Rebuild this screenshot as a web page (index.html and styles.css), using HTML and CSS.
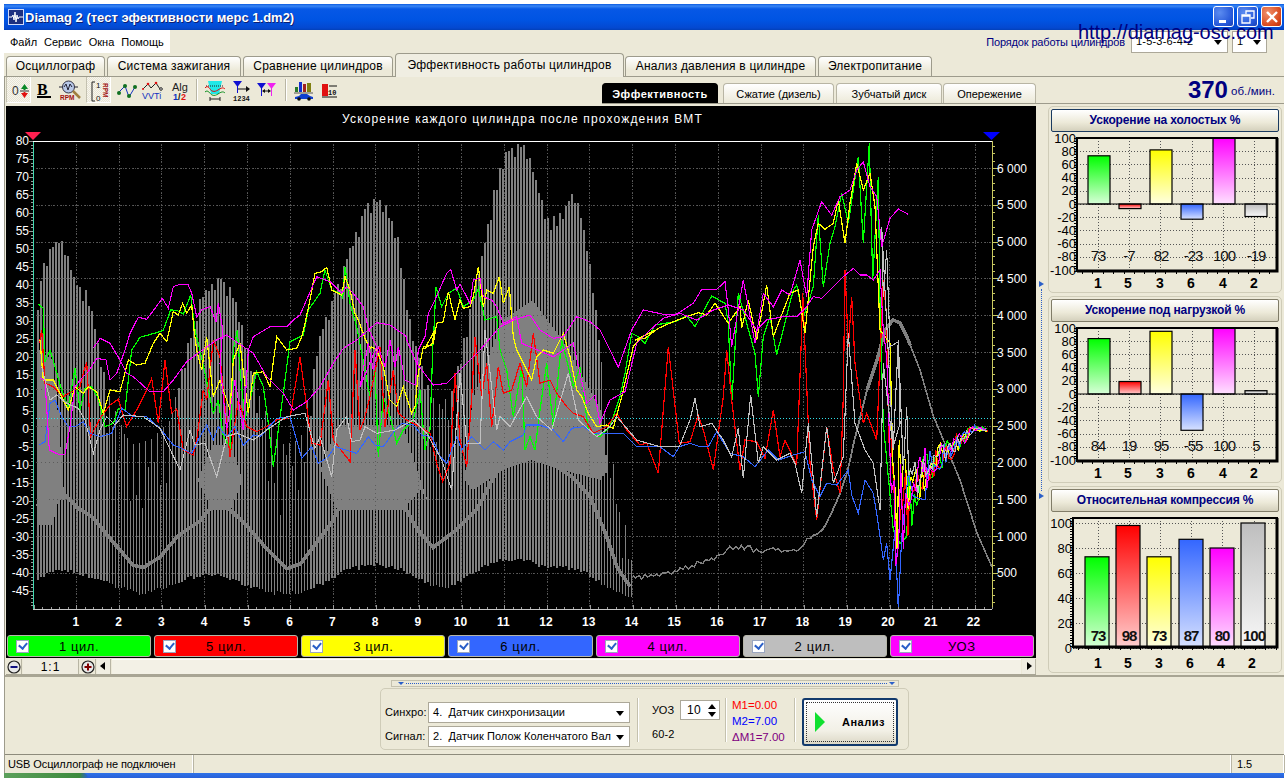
FILE: index.html
```html
<!DOCTYPE html>
<html lang="ru">
<head>
<meta charset="utf-8">
<title>Diamag 2</title>
<link rel="stylesheet" href="styles.css">
</head>
<body>
<div class="window">
  <div class="titlebar">
    <svg class="appicon" width="16" height="16" viewBox="0 0 16 16"><rect x="0.5" y="0.5" width="15" height="15" fill="#1c2f80" stroke="#cfd8f8"/><path d="M1 8h3l1-2 1 5 1-8 1 10 1-7 1 4 1-2h4" fill="none" stroke="#fff"/></svg>
    <span class="title-text">Diamag 2 (тест эфективности мерс 1.dm2)</span>
    <div class="winbtns">
      <span class="winbtn"><svg width="20" height="20" viewBox="0 0 20 20"><rect x="5" y="13" width="7" height="3" fill="#fff"/></svg></span>
      <span class="winbtn"><svg width="20" height="20" viewBox="0 0 20 20"><path d="M8 7V4h8v7h-3M4 8h8v8H4z M4 9h8" fill="none" stroke="#fff" stroke-width="1.3"/></svg></span>
      <span class="winbtn close"><svg width="20" height="20" viewBox="0 0 20 20"><path d="M5 5l10 10M15 5L5 15" stroke="#fff" stroke-width="2.4"/></svg></span>
    </div>
  </div>
  <div class="watermark">http://diamag-osc.com</div>
  <div class="menurow">
    <nav class="menu"><span>Файл</span><span>Сервис</span><span>Окна</span><span>Помощь</span></nav>
    <div class="order">
      <span class="order-label">Порядок работы цилиндров</span>
      <span class="combo order-combo"><span class="combo-text">1-5-3-6-4-2</span><i class="arrow"></i></span>
      <span class="combo order-small"><span class="combo-text">1</span><i class="arrow"></i></span>
    </div>
  </div>
  <div class="tabs">
    <span class="tab t1">Осциллограф</span>
    <span class="tab t2">Система зажигания</span>
    <span class="tab t3">Сравнение цилиндров</span>
    <span class="tab active t4">Эффективность работы цилиндров</span>
    <span class="tab t5">Анализ давления в цилиндре</span>
    <span class="tab t6">Электропитание</span>
  </div>
  <div class="content">
    <div class="toolrow">
      <div class="tools">
        <div class="toolgroup">
          <span class="tool pressed"><svg width="25" height="26" viewBox="0 0 25 26"><text x="5" y="18" class="ic-t" fill="#333">0</text><path d="M13 14h9" stroke="#333"/><path d="M17.5 7l3.5 5h-2.5v1h-2v-1H14z" fill="#0a8a28"/><path d="M17.5 21l3.5-5h-2.5v-1h-2v1H14z" fill="#e01010"/></svg></span>
          <span class="tool"><svg width="26" height="26" viewBox="0 0 26 26"><text x="6" y="18" class="ic-b">B</text><rect x="6" y="19" width="14" height="2" fill="#000"/></svg></span>
          <span class="tool"><svg width="26" height="26" viewBox="0 0 26 26"><path d="M2 10h19" stroke="#223"/><circle cx="11.500" cy="10" r="6" fill="#b8c8e8" stroke="#334"/><path d="M7 10l2-3 2 6 2-6 2 3" fill="none" stroke="#223"/><path d="M16 14l7 7" stroke="#a08040" stroke-width="2.500"/><text x="3" y="23" class="ic-s" fill="#a01010">RPM</text></svg></span>
        </div>
        <div class="toolgroup g2">
          <span class="tool pressed"><svg width="25" height="26" viewBox="0 0 25 26"><path d="M8 5H5v19h3" fill="none" stroke="#222"/><text x="9" y="11" class="ic-d" fill="#111">1</text><text x="9" y="24" class="ic-d" fill="#111">0</text><text x="0" y="0" class="ic-s" fill="#a01010" transform="translate(16 6) rotate(90)">RPM</text></svg></span>
          <span class="tool shifted"><svg width="26" height="26" viewBox="0 0 26 26"><path d="M4 16l7-7 4 11 6-10" fill="none" stroke="#1030c0"/><g fill="#107020"><circle cx="5" cy="16" r="2"/><circle cx="11" cy="9" r="2"/><circle cx="15" cy="19" r="2"/><circle cx="21" cy="10" r="2"/></g></svg></span>
          <span class="tool"><svg width="26" height="26" viewBox="0 0 26 26"><path d="M3 12l5-5 3 4 5-5 4 6" fill="none" stroke="#222"/><g fill="#e01010"><circle cx="3" cy="12" r="1"/><circle cx="8" cy="7" r="1.300"/><circle cx="16" cy="6" r="1.300"/></g><circle cx="21" cy="12" r="1.300" fill="#fff" stroke="#222"/><text x="2" y="22" class="ic-v">VVTi</text></svg></span>
          <span class="tool"><svg width="26" height="26" viewBox="0 0 26 26"><text x="6" y="14" class="ic-a">Alg</text><text x="7" y="23" class="ic-h" fill="#1030c0">1</text><text x="12" y="23" class="ic-h" fill="#111">/</text><text x="15" y="23" class="ic-h" fill="#e01010">2</text></svg></span>
        </div>
        <i class="toolsep sep1"></i>
        <div class="toolgroup">
          <span class="tool"><svg width="26" height="26" viewBox="0 0 26 26"><path d="M6 4h14l-3 13H9z" fill="#20e8e8"/><path d="M4 9h18" stroke="#222" stroke-dasharray="1 1"/><path d="M3 11c3-4 5 2 7 3 3 1 4 0 6-1 3-2 5-3 7-1" fill="none" stroke="#e01010"/><path d="M3 15c3-3 5 2 7 3 3 1 4 0 6-1 3-2 5-3 7-1" fill="none" stroke="#109020"/><path d="M8 22h10M8 20v4M18 20v4" stroke="#222"/></svg></span>
          <span class="tool"><svg width="26" height="26" viewBox="0 0 26 26"><path d="M5 4h9l-4.500 6z" fill="#1010d0"/><path d="M9.500 8v8" stroke="#1010d0"/><path d="M10 12h11" stroke="#111"/><path d="M18 9l4 3-4 3z" fill="#111"/><text x="5" y="24" class="ic-n">1234</text></svg></span>
          <span class="tool"><svg width="26" height="26" viewBox="0 0 26 26"><path d="M3 6h9l-4.500 6z" fill="#1010d0"/><path d="M7.500 10v9" stroke="#1010d0"/><path d="M13 6h9l-4.500 6z" fill="#f020f0"/><path d="M17.500 10v9" stroke="#f020f0"/><path d="M9 14h7" stroke="#111"/><path d="M11 12l-3 2 3 2zM14 12l3 2-3 2z" fill="#111"/></svg></span>
        </div>
        <i class="toolsep sep2"></i>
        <div class="toolgroup">
          <span class="tool"><svg width="26" height="26" viewBox="0 0 26 26"><rect x="4" y="10" width="3" height="5" fill="#2a7a2a"/><rect x="8" y="5" width="3" height="10" fill="#1030d0"/><rect x="12" y="7" width="3" height="8" fill="#a02020"/><rect x="16" y="6" width="4" height="9" fill="#808010"/><path d="M3 16h19" stroke="#555"/><path d="M4 22v-2l4-1 2-2h6l3 2 3 1v2z" fill="#1040d0"/><circle cx="8" cy="22" r="1.800" fill="#111"/><circle cx="18" cy="22" r="1.800" fill="#111"/></svg></span>
          <span class="tool"><svg width="26" height="26" viewBox="0 0 26 26"><rect x="5" y="7" width="6" height="12" fill="#e01010"/><text x="11" y="18" class="ic-n">10</text><path d="M5 20h15M12 9h8" stroke="#111"/></svg></span>
        </div>
      </div>
      <div class="viewtabs">
        <span class="vtab black">Эффективность</span>
        <span class="vtab v2">Сжатие (дизель)</span>
        <span class="vtab v3">Зубчатый диск</span>
        <span class="vtab v4">Опережение</span>
        <div class="rpm"><b>370</b><span>об./мин.</span></div>
      </div>
    </div>
    <div class="main">
      <div class="chartcol">
        <div class="chartblack">
          <svg id="plot" class="plot" width="1030" height="529" viewBox="6 106 1030 529">
            <g id="plotdata"></g>
            <text x="522.500" y="122.500" class="ch-title" text-anchor="middle">Ускорение каждого цилиндра после прохождения ВМТ</text>
            <g id="plotlabels"></g>
          </svg>
          <div class="series">
            <label class="sbtn green"><i class="check"></i><span>1 цил.</span></label>
            <label class="sbtn red"><i class="check"></i><span>5 цил.</span></label>
            <label class="sbtn yellow"><i class="check"></i><span>3 цил.</span></label>
            <label class="sbtn blue"><i class="check"></i><span>6 цил.</span></label>
            <label class="sbtn magenta"><i class="check"></i><span>4 цил.</span></label>
            <label class="sbtn gray"><i class="check"></i><span>2 цил.</span></label>
            <label class="sbtn magenta"><i class="check"></i><span>УОЗ</span></label>
          </div>
        </div>
        <div class="scrollrow">
          <span class="zoomb"><svg width="14" height="14" viewBox="0 0 14 14"><circle cx="7" cy="7" r="6" fill="#e8e8e8" stroke="#222" stroke-width="1.200"/><rect x="3.500" y="6" width="7" height="2" fill="#101080"/></svg></span>
          <span class="zoomval">1:1</span>
          <span class="zoomb"><svg width="14" height="14" viewBox="0 0 14 14"><circle cx="7" cy="7" r="6" fill="#e8e8e8" stroke="#222" stroke-width="1.200"/><path d="M3.500 7h7M7 3.500v7" stroke="#800000" stroke-width="2"/></svg></span>
          <span class="sarrow left"></span>
          <span class="strack"></span>
          <span class="sarrow right"></span>
        </div>
      </div>
      <div class="vsplit"><i class="tri"></i><i class="vdots"></i><i class="tri"></i></div>
      <div class="side">
        <section class="group"><h3 class="ghead">Ускорение на холостых %</h3><svg id="m1" class="mini" width="232" height="160"></svg></section>
        <section class="group"><h3 class="ghead">Ускорение под нагрузкой %</h3><svg id="m2" class="mini" width="232" height="160"></svg></section>
        <section class="group"><h3 class="ghead">Относительная компрессия %</h3><svg id="m3" class="mini" width="232" height="160"></svg></section>
      </div>
    </div>
    <div class="bottom">
      <div class="hsplit"><i class="dn"></i><i class="hdots"></i><i class="dn"></i></div>
      <div class="panel">
        <div class="selects">
          <span class="flabel">Синхро:</span><span class="combo sel"><span class="combo-text">4.&nbsp; Датчик синхронизации</span><i class="arrow"></i></span>
          <span class="flabel">Сигнал:</span><span class="combo sel"><span class="combo-text">2.&nbsp; Датчик Полож Коленчатого Вал</span><i class="arrow"></i></span>
        </div>
        <i class="psep s1"></i>
        <div class="uoz">
          <div class="uozrow"><span class="flabel">УОЗ</span><span class="spin"><span class="spin-val">10</span><span class="spin-arrows"><i class="up"></i><i class="down"></i></span></span></div>
          <span class="flabel teeth">60-2</span>
        </div>
        <i class="psep s2"></i>
        <div class="marks"><span class="mred">M1=0.00</span><span class="mblue">M2=7.00</span><span class="mpurple">ΔM1=7.00</span></div>
        <i class="psep s3"></i>
        <button class="analyze"><span class="focus"><i class="play"></i><b>Анализ</b></span></button>
      </div>
    </div>
    <div class="status">
      <span class="st st1">USB Осциллограф не подключен</span>
      <span class="st st2"></span>
      <span class="st st3">1.5</span>
    </div>
  </div>
  <div class="taskbar"><i class="start"></i></div>
</div>
<script src="chart.js"></script>
</body>
</html>
```
FILE: styles.css
```css
* { box-sizing: border-box; }
html, body { margin: 0; padding: 0; background: #fff; }
body { padding: 4px 4px 0; font-family: "Liberation Sans", Arial, sans-serif; font-size: 11px; color: #000; height: 778px; overflow: hidden; }
.window { position: relative; width: 1280px; height: 774px; display: flex; flex-direction: column; background: #ece9d8; }

.titlebar { height: 26px; flex: none; display: flex; align-items: center; padding: 0 2px 0 4px; background: linear-gradient(#0a5ae0 0, #3a86f4 2px, #0658e6 5px, #0054e3 16px, #0448d0 24px, #0340b8 100%); color: #fff; }
.appicon { flex: none; }
.title-text { margin-left: 1px; font-weight: bold; font-size: 13px; letter-spacing: 0; text-shadow: 1px 1px 0 #0f1f70; white-space: nowrap; }
.winbtns { margin-left: auto; display: flex; gap: 3px; align-self: flex-start; margin-top: 2px; }
.winbtn { width: 21px; height: 21px; border: 1px solid #fff; border-radius: 3px; background: radial-gradient(circle at 30% 30%, #5c8cf0, #2456d8 70%, #1a40b0); display: block; }
.winbtn.close { background: radial-gradient(circle at 30% 30%, #f0906c, #d8481c 70%, #b83010); }
.winbtn svg { display: block; }
.watermark { position: absolute; left: 1074px; top: 17px; font-size: 20px; letter-spacing: -.05px; color: #000080; white-space: nowrap; z-index: 5; }

.menurow { height: 23px; flex: none; display: flex; justify-content: space-between; }
.menu { width: 166px; background: #fff; display: flex; gap: 7px; padding: 0 0 0 6px; align-items: center; font-size: 11px; letter-spacing: 0; }
.order { display: flex; align-items: center; gap: 4px; padding-right: 17px; }
.order-label { color: #000080; letter-spacing: -.15px; margin-right: 2px; }
.combo { position: relative; display: block; height: 21px; background: #fff; border: 1px solid #aca899; line-height: 18px; overflow: hidden; white-space: nowrap; }
.combo-text { padding-left: 4px; display: block; overflow: hidden; }
.arrow { position: absolute; right: 5px; top: 8px; width: 0; height: 0; border-left: 4px solid transparent; border-right: 4px solid transparent; border-top: 5px solid #000; }
.order-combo { width: 97px; height: 22px; letter-spacing: .2px; }
.order-small { width: 35px; height: 22px; }

.tabs { height: 23px; flex: none; display: flex; align-items: flex-end; padding-left: 2px; gap: 2px; position: relative; z-index: 1; }
.tab { height: 20px; border: 1px solid #9d9b8c; border-bottom: 0; border-radius: 4px 4px 0 0; background: linear-gradient(#fff, #ece9d8 70%); text-align: center; font-size: 12px; line-height: 19px; letter-spacing: .2px; white-space: nowrap; }
.t1 { width: 99px; } .t2 { width: 134px; } .t3 { width: 150px; }
.active { width: 229px; height: 24px; background: #f0eee2; margin-bottom: -1px; line-height: 22px; margin-left: 0; margin-right: -1px; }
.t5 { width: 191px; } .t6 { width: 114px; }

.content { flex: 1; min-height: 0; display: flex; flex-direction: column; border-top: 1px solid #9d9b8c; border-left: 1px solid #9d9b8c; }

.toolrow { height: 28px; flex: none; display: flex; justify-content: space-between; }
.tools { display: flex; padding-left: 1px; height: 26px; }
.toolgroup { display: flex; }
.g2 { margin-left: 3px; }
.tool { width: 26px; height: 26px; display: block; }
.tool svg { display: block; }
.shifted { margin-left: 3px; }
.pressed { width: 25px; background: repeating-conic-gradient(#f8f6ee 0 25%, #e8e5d6 0 50%) 0 0/2px 2px; border-right: 1px solid #fff; border-bottom: 1px solid #fff; border-left: 1px solid #c4c1b0; }
.toolsep { width: 2px; height: 22px; background: #b8b5a4; border-right: 1px solid #fff; }
.sep1 { margin: 2px 4px 0 4px; }
.sep2 { margin: 2px 4px 0 5px; }
.ic-t { font: 12px "Liberation Sans", sans-serif; }
.ic-b { font: bold 16px "Liberation Serif", serif; }
.ic-s { font: bold 6.500px "Liberation Sans", sans-serif; }
.ic-d { font: 8px "Liberation Sans", sans-serif; }
.ic-v { font: 9px "Liberation Sans", sans-serif; fill: #1030c0; }
.ic-a { font: 11px "Liberation Sans", sans-serif; fill: #222; }
.ic-h { font: bold 9px "Liberation Sans", sans-serif; }
.ic-n { font: bold 7px "Liberation Mono", monospace; fill: #111; }

.viewtabs { width: 682px; height: 27px; display: flex; align-items: flex-end; border-bottom: 1px solid #9d9b8c; padding-left: 0; position: relative; }
.vtab { height: 20px; margin-bottom: 0; border: 1px solid #b8b5a4; border-bottom: 0; border-radius: 4px 4px 0 0; background: linear-gradient(#fff, #ece9d8); text-align: center; line-height: 20px; font-size: 11px; letter-spacing: 0; white-space: nowrap; }
.vtab.black { width: 116px; margin-right: 5px; background: #000; color: #fff; font-weight: bold; border-color: #000; letter-spacing: .5px; }
.v2 { width: 111px; margin-right: 2px; } .v3 { width: 106px; margin-right: 1px; } .v4 { width: 93px; }
.rpm { position: absolute; right: 9px; bottom: 0; height: 27px; display: flex; align-items: center; gap: 3px; color: #000080; }
.rpm b { font-size: 24px; letter-spacing: 0; line-height: 26px; }
.rpm span { font-size: 11.500px; color: #000080; letter-spacing: .1px; margin-top: 3px; }

.main { height: 570px; flex: none; display: flex; padding-left: 1px; padding-top: 1px; }
.chartcol { width: 1030px; flex: none; display: flex; flex-direction: column; }
.chartblack { background: #000; height: 552px; flex: none; }
.plot { display: block; }
.ch-title { font: 12px "Liberation Sans", sans-serif; letter-spacing: 1.15px; fill: #fff; }
.ylab { font: 12px "Liberation Sans", sans-serif; fill: #fff; }
.xlab { font: bold 12px "Liberation Sans", sans-serif; fill: #fff; }

.series { display: flex; gap: 3px; padding: 0 2px 0 1px; height: 22px; }
.sbtn { flex: 1; height: 22px; border: 1px solid #b5b5a8; border-radius: 3px; display: flex; align-items: center; position: relative; font-size: 13px; letter-spacing: .6px; }
.sbtn span { flex: 1; text-align: center; }
.check { position: absolute; left: 8px; top: 4px; width: 13px; height: 13px; background: #fff; border: 1px solid #9aa6c0; }
.check::after { content: ""; position: absolute; left: 2px; top: 1px; width: 6px; height: 4px; border-left: 2px solid #2a5fc8; border-bottom: 2px solid #2a5fc8; transform: rotate(-50deg); }
.green { background: #00ff00; } .red { background: #ff0000; } .yellow { background: #ffff00; } .blue { background: #3366ff; } .magenta { background: #ff00ff; } .gray { background: #bebebe; }

.scrollrow { height: 16px; margin-top: 1px; display: flex; align-items: stretch; gap: 1px; border-bottom: 1px solid #a8a594; }
.zoomb { width: 16px; background: #ece9d8; border-right: 1px solid #b8b5a4; display: flex; align-items: center; justify-content: center; }
.zoomval { width: 56px; text-align: center; font-size: 12px; line-height: 17px; letter-spacing: 1px; background: #efece0; border-right: 1px solid #b8b5a4; }
.sarrow { width: 14px; position: relative; background: #f0eee2; border-right: 1px solid #b8b5a4; }
.sarrow::after { content: ""; position: absolute; top: 3px; width: 0; height: 0; border-top: 4px solid transparent; border-bottom: 4px solid transparent; }
.sarrow.left::after { left: 3px; border-right: 5px solid #000; }
.sarrow.right::after { left: 5px; border-left: 5px solid #000; }
.strack { flex: 1; background: #f3f1e6; border-top: 1px solid #fff; }

.vsplit { width: 12px; flex: none; display: flex; flex-direction: column; align-items: center; justify-content: center; height: 568px; padding: 0 2px 0 0; }
.vsplit .tri { width: 0; height: 0; border-top: 3px solid transparent; border-bottom: 3px solid transparent; border-left: 5px solid #2a5fc8; }
.vdots { height: 202px; width: 1px; border-left: 1px dotted #2a5fc8; margin: 2px 0; }

.side { width: 234px; flex: none; display: flex; flex-direction: column; gap: 3px; }
.group { height: 187px; border: 1px solid #cfccb8; border-radius: 5px; padding: 2px 2px 0; display: block; }
.ghead { margin: 0; height: 23px; border: 1px solid #1a3a60; border-radius: 2px; background: linear-gradient(#fff, #ece9d8 60%, #d4d0bc); color: #00007f; font-size: 12px; line-height: 21px; text-align: center; font-weight: bold; letter-spacing: -.14px; }
.group:nth-child(n+2) .ghead { border-color: #807c68; }
.mini { display: block; margin-left: -1px; margin-top: 1px; overflow: visible; }
.my { font: 13px "Liberation Sans", sans-serif; }
.mx { font: bold 14px "Liberation Sans", sans-serif; }
.mv { font: 15px "Liberation Sans", sans-serif; letter-spacing: -1px; fill: #111; }
.mv.bold { font-weight: bold; }

.bottom { flex: 1; min-height: 0; border-top: 2px solid #a8a594; display: flex; flex-direction: column; align-items: center; padding-top: 3px; }
.hsplit { width: 508px; height: 7px; flex: none; border: 1px solid #c4c1ae; display: flex; align-items: center; justify-content: space-between; padding: 0 3px 0 6px; margin-left: 0; }
.dn { width: 0; height: 0; border-left: 3px solid transparent; border-right: 3px solid transparent; border-top: 3px solid #2a5fc8; }
.hdots { flex: 1; height: 1px; border-top: 1px dotted #2a5fc8; margin: 0 2px; }
.panel { margin-top: 1px; width: 529px; height: 62px; flex: none; border: 1px solid #cfccb8; border-radius: 5px; display: flex; align-items: stretch; }
.selects { display: grid; grid-template-columns: 43px 202px; grid-auto-rows: 21px; row-gap: 3px; align-content: start; padding: 13px 0 0 4px; }
.flabel { font-size: 11px; line-height: 21px; letter-spacing: .1px; }
.sel { height: 21px; letter-spacing: .05px; }
.sel .combo-text { width: 184px; }
.psep { background: #c4c1ae; margin: 9px 0 7px; border-right: 1px solid #fff; width: 2px; }
.s1 { margin-left: 7px; } .s2 { margin-left: 5px; } .s3 { margin-left: 0; }
.uoz { width: 81px; padding: 11px 0 0 13px; display: flex; flex-direction: column; gap: 3px; }
.uozrow { display: flex; align-items: center; justify-content: space-between; height: 20px; width: 68px; }
.spin { width: 40px; height: 20px; background: #fff; border: 1px solid #aca899; display: flex; align-items: center; justify-content: space-between; padding: 0 3px 0 6px; font-size: 12px; letter-spacing: .3px; }
.spin-arrows { display: flex; flex-direction: column; gap: 3px; }
.spin-arrows i { width: 0; height: 0; border-left: 4px solid transparent; border-right: 4px solid transparent; display: block; }
.spin-arrows .up { border-bottom: 5px solid #000; }
.spin-arrows .down { border-top: 5px solid #000; }
.teeth { margin-top: 1px; }
.marks { width: 67px; flex: none; padding: 8px 0 0 5px; display: flex; flex-direction: column; font-size: 11.500px; line-height: 16px; white-space: nowrap; }
.mred { color: #ff0000; } .mblue { color: #0000ff; } .mpurple { color: #800080; }
.analyze { margin: 9px 0 0 6px; width: 96px; height: 48px; padding: 2px; border: 2px solid #123a6c; border-radius: 3px; background: linear-gradient(#fff, #f2f0e6 70%, #dcd8c6); font: inherit; }
.focus { height: 100%; display: flex; align-items: center; border: 1px dotted #333; padding-left: 8px; }
.focus b { margin-left: 17px; font-size: 11px; letter-spacing: .5px; }
.play { width: 0; height: 0; border-left: 10px solid #10e030; border-top: 10px solid transparent; border-bottom: 10px solid transparent; }

.status { height: 19px; flex: none; display: flex; border-top: 1px solid #8d8b7c; }
.st { display: block; height: 18px; line-height: 18px; padding-left: 3px; font-size: 11px; letter-spacing: -.1px; border-right: 1px solid #fff; box-shadow: 1px 0 0 #b8b5a4; }
.st1 { width: 188px; margin-right: 3px; }
.st2 { width: 1035px; margin-right: 3px; }
.st3 { flex: 1; }

.taskbar { height: 5px; flex: none; background: linear-gradient(#2f72e8, #2860d8); }
.start { display: block; width: 84px; height: 5px; background: linear-gradient(90deg, #5ca05c, #3c8a3c 90%, #2860d8); border-radius: 0 6px 0 0; }
```
FILE: chart.js
```js
var crop = { A: [0, 130], B: [0, 330], C: [340, 330], D: [680, 330], E: [600, 130], F: [300, 130] };
function pts() {
  var out = [];
  for (var i = 0; i < arguments.length; i += 2) {
    var o = crop[arguments[i]], a = arguments[i + 1];
    for (var j = 0; j + 1 < a.length; j += 2) out.push([o[0] + a[j] / 3, o[1] + a[j + 1] / 3]);
  }
  return out;
}
var seed = 12345;
function rnd() { seed = (seed * 1103515245 + 12345) & 0x7fffffff; return seed / 0x7fffffff; }
function lerp(tbl, x) {
  if (x <= tbl[0][0]) return tbl[0][1];
  for (var i = 1; i < tbl.length; i++) if (x <= tbl[i][0]) {
    var a = tbl[i - 1], b = tbl[i];
    return a[1] + (b[1] - a[1]) * (x - a[0]) / (b[0] - a[0]);
  }
  return tbl[tbl.length - 1][1];
}
function tail(p, cAmp) {
  var x = p.length ? p[p.length - 1][0] : 885, y;
  var center = [[885, 470], [900, 505], [915, 480], [935, 460], [955, 445], [975, 428], [986, 430]];
  var amp = [[885, 110], [900, 90], [912, 45], [930, 24], [955, 14], [975, 4], [986, 2]];
  x = Math.max(x, 885);
  while (x < 986) {
    x += 1.6 + rnd() * 1.6;
    y = lerp(center, x) + (rnd() * 2 - 1) * lerp(amp, x) * cAmp;
    p.push([x, y]);
  }
  return p;
}
function d(p) {
  return 'M' + p.map(function (q) { return q[0].toFixed(1) + ' ' + q[1].toFixed(1); }).join('L');
}

var green = tail(pts(
  'A', [115, 522, 130, 535],
  'B', [135, 95, 150, 60, 165, 110, 185, 180, 205, 230, 225, 115, 240, 240, 255, 175, 275, 170, 295, 205, 315, 290, 340, 280, 355, 235, 375, 240, 395, 60, 420, 22, 480, 5],
  'A', [490, 600, 512, 540, 530, 541, 550, 552, 572, 495, 585, 600],
  'B', [595, 40, 615, 130, 640, 250, 655, 210, 670, 320, 690, 350, 700, 60, 712, 0, 720, 120, 735, 270, 770, 125, 790, 170, 805, 280, 820, 410, 850, 190, 870, 35, 910, 15],
  'F', [25, 540, 60, 490, 75, 420, 95, 480, 120, 490, 128, 505, 135, 410, 150, 520, 170, 590],
  'C', [90, 200, 105, 120, 115, 380, 130, 200, 145, 240, 170, 340, 190, 300, 220, 270, 240, 180, 255, 360, 270, 300, 280, 10],
  'F', [400, 640, 408, 470, 425, 530, 445, 490, 470, 475, 490, 530, 520, 510, 535, 475, 555, 570, 590, 560],
  'C', [480, 60, 500, 120, 520, 260, 545, 110, 555, 360, 570, 320, 585, 360, 600, 240, 620, 100, 640, 290, 665, 30, 700, 170, 720, 110, 745, 300, 780, 320, 810, 290, 840, 200, 855, 130, 875, 10],
  'E', [115, 620, 135, 640, 165, 585, 225, 575, 260, 558, 285, 590, 335, 498, 375, 520, 385, 580, 395, 820, 415, 490, 440, 580, 465, 670, 475, 800, 490, 620, 510, 560, 530, 675, 580, 480, 590, 465, 610, 565, 640, 470, 655, 255, 670, 470, 690, 340, 705, 290, 725, 190, 745, 280, 775, 80, 790, 340, 808, 40, 818, 450, 835, 140, 840, 520, 850, 880],
  'D', [640, 600, 660, 640, 680, 620]), .9);

var red = tail(pts(
  'B', [118, 40, 125, 0, 135, 160, 160, 170, 190, 200, 205, 190, 225, 180, 240, 170, 250, 130, 260, 95, 272, 320, 300, 265, 330, 225, 355, 208, 380, 290, 410, 240, 440, 180, 455, 145, 475, 280, 495, 90, 515, 250, 530, 235, 550, 360, 580, 375, 590, 330, 610, 180, 620, 210, 640, 30, 660, 80, 690, 380, 715, 210, 740, 290, 770, 305, 800, 290, 830, 270, 870, 265, 900, 80, 935, 340, 960, 345, 985, 150, 1000, 330],
  'C', [30, 395, 45, 60, 60, 300, 72, 270, 90, 200, 120, 50, 135, 290, 160, 120, 175, 250, 200, 270, 240, 290, 270, 310, 290, 400, 308, 455, 330, 400, 345, 130, 360, 330, 380, 410, 395, 200, 405, 20, 425, 200, 440, 100, 455, 290, 475, 110, 490, 190, 515, 180, 540, 100, 560, 170, 580, 10, 600, 160, 630, 150, 650, 190, 680, 230, 700, 250, 730, 260, 760, 310, 800, 290, 830, 250, 860, 300, 900, 345, 920, 340, 955, 430, 985, 50, 1018, 340],
  'D', [30, 335, 55, 255, 70, 300, 100, 420, 130, 200, 140, 60, 155, 210, 180, 420, 195, 330, 230, 335, 255, 385, 280, 240, 300, 380, 315, 330, 350, 405, 365, 0],
  'E', [608, 490],
  'D', [390, 400, 410, 570, 440, 290, 460, 420, 480, 490, 490, 200],
  'E', [735, 420, 745, 650, 755, 500, 765, 700, 790, 880],
  'D', [560, 250, 590, 330],
  'E', [850, 450, 860, 560]), .8);

var yellow = tail(pts(
  'B', [120, 30, 130, 150, 160, 150, 180, 190, 205, 240, 225, 170, 250, 190, 265, 170, 290, 185, 310, 250, 330, 180, 360, 185, 385, 90, 410, 105, 435, 100, 460, 40, 480, 10, 500, 35],
  'A', [510, 590, 520, 545, 535, 555, 548, 520, 560, 550, 575, 525, 582, 600],
  'B', [590, 60, 605, 120, 620, 20, 640, 200, 660, 150, 690, 240, 700, 90, 720, 40, 745, 250, 760, 130, 790, 125, 810, 170, 830, 20, 860, 60, 890, 55, 905, 20],
  'F', [15, 580, 30, 510, 45, 430, 65, 425, 80, 412, 95, 480, 125, 495, 135, 440, 150, 480, 165, 550, 175, 570, 195, 625, 210, 655],
  'C', [95, 50, 110, 60, 130, 110, 150, 210, 170, 230, 190, 170, 215, 250, 225, 230, 235, 130, 250, 50, 275, 45, 285, 0],
  'F', [375, 655, 400, 640, 410, 580, 430, 575, 445, 485, 465, 570, 480, 510, 490, 535, 510, 530, 520, 500, 535, 410, 550, 530, 560, 480, 580, 490, 598, 440, 610, 520, 628, 470, 640, 620, 650, 660],
  'C', [575, 150, 590, 80, 610, 60, 640, 70, 670, 10, 690, 80, 710, 180, 725, 200, 745, 250, 770, 290, 800, 285, 820, 295, 845, 200, 880, 50, 900, 25, 945, 0],
  'E', [105, 630, 135, 625, 175, 595, 220, 575, 260, 560, 295, 548, 320, 555, 345, 520, 385, 580, 420, 530, 425, 595, 445, 510, 470, 630, 500, 465, 520, 620, 570, 490, 595, 480, 615, 610, 640, 350, 655, 280, 675, 298, 700, 280, 715, 210, 735, 340, 750, 220, 770, 100, 790, 180, 810, 130, 825, 230, 840, 600, 870, 640]), .7);

var blue = tail(pts(
  'B', [118, 345, 135, 335, 150, 220, 165, 210, 185, 260, 205, 290, 225, 290, 250, 275, 270, 310, 300, 320, 335, 310, 365, 235, 400, 260, 440, 260, 480, 295, 520, 345, 545, 355, 575, 370, 600, 320, 620, 285, 640, 330, 655, 290, 680, 320, 705, 290, 730, 345, 760, 315, 780, 320, 830, 265, 870, 260, 905, 385, 935, 350, 955, 400, 985, 380, 1005, 350],
  'C', [50, 370, 85, 320, 105, 345, 130, 350, 165, 300, 185, 280, 220, 285, 245, 315, 275, 320, 300, 380, 320, 400, 350, 320, 365, 360, 395, 320, 435, 360, 460, 335, 490, 360, 510, 335, 550, 315, 560, 285, 600, 285, 640, 300, 670, 335, 695, 295, 730, 290, 760, 310, 780, 310, 850, 310, 890, 350, 960, 350, 1000, 380, 1018, 350],
  'D', [30, 340, 60, 350, 85, 350, 110, 305, 150, 370, 190, 380, 225, 410, 265, 360, 295, 390, 340, 375, 375, 365, 395, 450, 420, 500, 440, 460, 470, 465, 505, 420, 515, 495, 535, 550, 555, 450, 580, 490, 590, 550, 610, 690, 620, 640, 630, 750, 645, 600, 655, 840, 665, 620, 685, 430, 700, 500, 735, 510]), .7);

var mag4 = tail(pts(
  'B', [120, 145, 135, 150, 148, 360, 180, 375, 195, 372, 210, 290, 225, 170, 245, 145, 265, 125, 290, 85, 318, 90, 330, 150, 350, 130, 375, 60, 390, 10],
  'A', [415, 562, 440, 568, 465, 535, 487, 505, 505, 535, 520, 470, 540, 463, 565, 465, 575, 490, 590, 560, 605, 540, 630, 530, 648, 575, 655, 520, 668, 600],
  'B', [660, 100, 680, 300, 705, 150, 730, 300, 745, 60, 760, 20],
  'A', [810, 590, 860, 590, 880, 570, 900, 555],
  'F', [50, 440, 90, 455, 125, 490, 140, 470, 160, 490, 190, 530, 205, 595, 230, 650],
  'C', [60, 170, 85, 40, 100, 120, 115, 50, 135, 110, 150, 30, 165, 110, 175, 50, 195, 150, 225, 165, 235, 60],
  'F', [375, 620, 385, 550, 405, 510, 440, 430, 452, 418, 470, 480, 480, 462, 510, 520, 520, 450, 540, 445, 550, 500, 575, 510, 590, 530, 610, 580, 650, 560, 665, 640],
  'C', [640, 80, 700, 40, 720, 130, 740, 220, 765, 195, 780, 280],
  'E', [30, 810, 75, 785, 110, 640, 150, 600, 190, 565, 240, 550, 290, 570, 340, 540, 385, 525, 430, 540, 470, 600, 500, 570, 550, 560, 590, 560, 620, 530, 640, 500, 665, 505, 700, 470, 730, 440, 760, 415, 780, 435, 800, 435, 820, 450, 840, 420, 850, 600, 860, 680]), .75);

var silver = tail(pts(
  'B', [125, 110, 150, 210, 170, 195, 200, 220, 235, 235, 255, 270, 280, 370, 300, 300, 320, 260, 345, 285, 370, 255, 430, 260, 480, 295, 540, 420, 570, 300, 585, 345, 615, 340, 650, 440, 680, 320, 710, 310, 760, 330, 800, 300, 860, 260, 915, 250, 945, 355, 960, 320, 995, 440, 1010, 300],
  'C', [20, 260, 35, 335, 60, 330, 75, 290, 110, 310, 165, 300, 220, 270, 260, 310, 305, 390, 335, 480, 360, 130, 380, 340, 420, 340, 435, 0, 470, 300, 480, 260, 510, 290, 560, 200, 590, 260, 635, 300, 685, 130, 715, 270, 770, 320, 810, 290, 830, 260, 890, 330, 960, 350, 1018, 350],
  'D', [30, 270, 45, 205, 60, 290, 95, 280, 130, 330, 155, 380, 175, 295, 190, 445, 212, 195, 235, 400, 250, 350, 290, 390, 330, 370, 345, 400, 365, 490, 385, 280, 410, 560, 440, 290, 460, 460, 490, 380, 505, 10, 525, 280, 555, 360, 580, 400, 600, 540, 610, 100, 640, 360],
  'E', [845, 290, 850, 500, 860, 360, 870, 650, 895, 635, 900, 880], 'D', [640, 350, 655, 30, 670, 420, 680, 230]), .55);

var uoz = pts(
  'B', [280, 55, 300, 25, 330, 40, 360, 90, 380, 130, 400, 140, 450, 185, 490, 185, 520, 150, 560, 95, 600, 65, 650, 30, 680, 15, 730, 50, 760, 70, 800, 140, 850, 190, 880, 240, 920, 215, 960, 170, 1000, 100],
  'C', [0, 70],
  'F', [130, 655, 170, 630, 230, 578, 270, 585, 320, 620],
  'C', [200, 30, 230, 100, 280, 165, 320, 160, 370, 110, 420, 60],
  'F', [600, 590, 640, 570, 690, 555, 720, 600, 760, 625, 790, 620, 830, 560, 870, 575, 900, 600, 930, 660],
  'E', [55, 712, 95, 600, 130, 540, 200, 555, 230, 552, 280, 520, 305, 478, 350, 478, 375, 455, 385, 540, 395, 650, 430, 450, 465, 640, 490, 490, 520, 530, 545, 480, 570, 495, 600, 390, 620, 500, 635, 300, 665, 215, 695, 255, 720, 200, 750, 180, 770, 120, 790, 95, 810, 170, 830, 200, 845, 350, 870, 265, 895, 237, 925, 253]);

var rpmCurve = [[37, 507], [50, 493], [60, 490], [77, 507], [93, 517], [113, 543], [133, 565], [143, 567], [160, 557], [177, 537], [200, 520], [213, 505], [227, 507], [247, 527], [267, 550], [287, 568], [300, 565], [313, 547], [333, 520], [340, 505], [353, 493], [373, 482], [397, 493], [417, 530], [433, 548], [457, 530], [477, 510], [500, 465], [525, 455], [547, 460], [573, 477], [590, 497], [607, 537], [617, 567], [630, 587]];
var rpmTail = [[633, 578], [680, 570], [700, 563], [720, 557], [730, 547], [750, 548], [760, 552], [773, 548], [787, 551], [800, 549], [807, 540], [823, 530], [837, 502], [847, 473], [857, 430], [867, 390], [877, 360], [885, 330], [893, 320], [900, 323], [907, 337], [920, 370], [933, 415], [960, 480], [977, 533], [992, 567]];

var topEnv = [[37, 310], [40, 275], [45, 255], [52, 245], [58, 239], [64, 243], [70, 268], [76, 285], [85, 290], [92, 315], [100, 360], [110, 400], [130, 445], [150, 440], [170, 420], [185, 350], [200, 295], [218, 277], [232, 290], [245, 340], [260, 400], [280, 445], [300, 440], [320, 330], [335, 290], [350, 245], [365, 205], [375, 197], [385, 205], [398, 240], [407, 310], [416, 350], [430, 395], [440, 405], [452, 390], [463, 338], [473, 290], [483, 247], [493, 190], [503, 153], [513, 147], [520, 142], [527, 150], [533, 173], [541, 200], [547, 218], [557, 215], [566, 205], [572, 192], [578, 205], [583, 230], [590, 270], [595, 310], [600, 350], [606, 420], [612, 455], [618, 510], [624, 520], [628, 540], [631, 560]];
var botEnv = [[37, 582], [50, 575], [62, 571], [80, 576], [100, 583], [120, 590], [140, 595], [160, 590], [190, 580], [218, 576], [240, 585], [270, 595], [300, 595], [330, 582], [345, 572], [375, 567], [400, 572], [425, 585], [445, 590], [465, 580], [485, 568], [505, 561], [525, 562], [545, 570], [575, 570], [590, 578], [605, 588], [620, 595], [632, 600]];
var coreTop = [[37, 350], [50, 360], [56, 420], [62, 500], [195, 480], [210, 445], [228, 445], [240, 480], [318, 470], [335, 425], [400, 425], [418, 480], [425, 500], [462, 480], [470, 400], [500, 320], [530, 300], [560, 340], [598, 410], [606, 470]];
var coreBot = [[37, 525], [50, 525], [56, 500], [62, 500], [195, 480], [210, 510], [228, 510], [240, 480], [318, 470], [335, 510], [400, 510], [418, 490], [425, 500], [462, 480], [470, 490], [500, 470], [530, 460], [560, 470], [598, 480], [606, 470]];

var bars = '', x, t, b, w, y1, y2;
for (x = 37; x < 632; x += 3) {
  t = lerp(topEnv, x);
  b = lerp(botEnv, x);
  w = t < 395 ? 2 : 1;
  if (x > 600) w = 1;
  y1 = t + (x % 2 ? 0 : rnd() * (t > 380 ? 70 : 14));
  y2 = b - rnd() * 4;
  bars += 'M' + x + ' ' + y1.toFixed(0) + 'h' + w + 'V' + y2.toFixed(0) + 'h-' + w + 'z';
  var ct = lerp(coreTop, x), cb = lerp(coreBot, x);
  if (ct + 1 < cb) bars += 'M' + x + ' ' + ct.toFixed(0) + 'h3V' + cb.toFixed(0) + 'h-3z';
}

var noise = [];
for (var i = 0; i < rpmTail.length - 1; i++) {
  var a = rpmTail[i], c = rpmTail[i + 1], n = Math.max(1, Math.round((c[0] - a[0]) / 3));
  for (var k = 0; k < n; k++) {
    var f = k / n, amp = a[0] < 800 ? 3 : (a[0] < 850 ? 1.5 : 0);
    noise.push([a[0] + (c[0] - a[0]) * f, a[1] + (c[1] - a[1]) * f + (k % 2 ? amp : -amp) * rnd()]);
  }
}
noise.push(rpmTail[rpmTail.length - 1]);
var wobble = rpmCurve.map(function (q) { return [q[0], q[1] + (rnd() - .5) * 2]; });

var grid = '', j;
for (j = 0; j < 12; j++) grid += 'M33 ' + (168.5 + Math.round(36.8 * j)) + 'H992';
for (j = 1; j <= 22; j++) grid += 'M' + (33.5 + Math.round(42.8 * j)) + ' 141V609';

var ticks = '', tk2 = '', tk3 = '';
for (j = 0; j <= 130; j++) { var yy = 141 + 3.6 * j, big = j % 5 === 0 && j <= 125; if (yy < 609) ticks += 'M' + (big ? 29 : 31) + ' ' + Math.round(yy) + 'H33'; }
for (j = 0; j < 64; j++) { var yr = 168 - 36.8 * 0.6 + 7.36 * j; if (yr < 609 && yr > 141) tk2 += 'M993 ' + Math.round(yr) + 'H' + ((j - 3) % 5 === 0 ? 998 : 995); }
for (j = 0; j < 113; j++) { tk3 += 'M' + Math.round(33.5 + 8.56 * j) + ' 609v-' + (j % 5 === 0 ? 4 : 2); }

function line(dd, col, sw, extra) { return '<path d="' + dd + '" fill="none" stroke="' + col + '" stroke-width="' + sw + '" shape-rendering="crispEdges"' + (extra || '') + '/>'; }

var h = '';
h += line(grid, '#4c4c4c', 1, ' stroke-dasharray="1 2"');
h += '<path d="' + bars + '" fill="#808080" shape-rendering="crispEdges"/>';
h += line(grid, '#5c5c5c', 1, ' stroke-dasharray="1 3"');
h += line(d(wobble), '#808080', 3.6);
h += line(d(noise.slice(0, 60)), '#808080', 1.4);
h += line(d(noise.slice(59, 78)), '#808080', 1.8);
h += line(d(noise.slice(77, 92)), '#808080', 3.4);
h += line(d(noise.slice(91)), '#808080', 1.6);
h += line(d(green), '#00ff00', 1.2);
h += line(d(red), '#ff0000', 1.2);
h += line(d(yellow), '#ffff00', 1.2);
h += line(d(blue), '#3366ff', 1.1);
h += line(d(mag4), '#ff00ff', 1.1);
h += line(d(silver), '#c0c0c0', 1.1);
h += line(d(uoz), '#ff00ff', 1.1);
h += line('M33 418.5H992', '#30e0e8', 1, ' stroke-dasharray="1 2"');
h += line('M33.5 141V609', '#40d8b0', 1);
h += line('M33 141.5H992', '#ffffff', 1.4);
h += line('M33 609.5H992', '#c8c8c8', 1);
h += line('M992.5 141V609', '#c8c860', 1);
h += line(ticks, '#9a9a9a', 1);
h += line(tk2, '#c8c860', 1);
h += line(tk3, '#9a9a9a', 1);
h += '<path d="M25 132h16l-8 8z" fill="#ff2050"/><path d="M983 132h17l-8.500 8z" fill="#0000ff"/>';
document.getElementById('plotdata').innerHTML = h;

var lab = '';
for (j = 80; j >= -45; j -= 5) lab += '<text class="ylab" x="29" y="' + (428.7 - 3.6 * j + 4.5).toFixed(1) + '" text-anchor="end">' + j + '</text>';
for (j = 0; j < 12; j++) {
  var v = 6000 - 500 * j, s = v >= 1000 ? Math.floor(v / 1000) + ' ' + (v % 1000 === 0 ? '000' : '500') : '500';
  lab += '<text class="ylab" x="997" y="' + (168 + 36.8 * j + 4.5).toFixed(1) + '">' + s + '</text>';
}
for (j = 1; j <= 22; j++) lab += '<text class="xlab" x="' + (33 + 42.75 * j).toFixed(1) + '" text-anchor="middle" y="626">' + j + '</text>';
document.getElementById('plotlabels').innerHTML = lab;

var cols = [['#00ff00', '#d8ffd8'], ['#ff0000', '#ffd0d0'], ['#ffff00', '#ffffe0'], ['#3366ff', '#d8e2ff'], ['#ff00ff', '#ffe0ff'], ['#bebebe', '#f8f8f8']];
var names = ['1', '5', '3', '6', '4', '2'];

function mini(id, vals, cfg) {
  var o = '<defs>';
  cols.forEach(function (c, i) {
    o += '<linearGradient id="' + id + 'g' + i + '" x1="0" y1="0" x2="0" y2="1"><stop offset="0" stop-color="' + c[0] + '"/><stop offset="1" stop-color="' + c[1] + '"/></linearGradient>';
  });
  o += '</defs>';
  var g = '';
  cfg.yvals.forEach(function (v) { g += 'M' + cfg.left + ' ' + (Math.round(cfg.zero - v * cfg.scale) + .5) + 'H' + cfg.right; });
  cfg.grid.forEach(function (x) { g += 'M' + (x + .5) + ' ' + cfg.top + 'V' + cfg.bottom; });
  o += '<path d="' + g + '" stroke="#555" stroke-dasharray="1 2" fill="none" shape-rendering="crispEdges"/>';
  vals.forEach(function (v, i) {
    var top = v >= 0 ? cfg.zero - v * cfg.scale : cfg.zero, hh = Math.abs(v) * cfg.scale;
    o += '<rect x="' + cfg.bars[i] + '" y="' + top.toFixed(1) + '" width="' + cfg.bw + '" height="' + hh.toFixed(1) + '" fill="url(#' + id + 'g' + i + ')" stroke="#000" stroke-width="1.200"/>';
  });
  if (cfg.negative) o += '<path d="M' + cfg.left + ' ' + cfg.zero + 'H' + cfg.right + '" stroke="#000"/>';
  var tk = '', q;
  for (q = cfg.top; q <= cfg.bottom; q += 2.66) tk += 'M' + (cfg.left - 3) + ' ' + Math.round(q) + 'h3';
  for (q = cfg.left + 5; q < cfg.right; q += 10.4) tk += 'M' + Math.round(q) + ' ' + cfg.bottom + 'v3';
  o += '<path d="' + tk + '" stroke="#000" shape-rendering="crispEdges"/>';
  o += '<path d="M' + cfg.left + ' ' + cfg.top + 'H' + cfg.right + 'V' + cfg.bottom + 'H' + cfg.left + 'z" fill="none" stroke="#000" stroke-width="2"/>';
  o += '<path d="M' + cfg.right + ' ' + cfg.top + 'V' + cfg.bottom + 'H' + cfg.left + '" fill="none" stroke="#000" stroke-width="3"/>';
  cfg.yvals.forEach(function (v) { o += '<text class="my" x="' + cfg.labx + '" y="' + (cfg.zero - v * cfg.scale + cfg.ladj).toFixed(1) + '" text-anchor="end">' + v + '</text>'; });
  vals.forEach(function (v, i) {
    o += '<text class="mv' + (cfg.bold ? ' bold' : '') + '" text-anchor="middle" x="' + cfg.vx[i] + '" y="' + cfg.vy + '">' + v + '</text>';
    o += '<text class="mx" text-anchor="middle" x="' + cfg.xx[i] + '" y="' + cfg.xy + '">' + names[i] + '</text>';
  });
  var el = document.getElementById(id);
  el.setAttribute('viewBox', '1049 ' + cfg.vb + ' 232 160');
  el.innerHTML = o;
}

function accel(dy) {
  return {
    vb: 133 + dy, top: 138 + dy, bottom: 271 + dy, left: 1076, right: 1276, zero: 204 + dy, scale: .66,
    yvals: [100, 80, 60, 40, 20, 0, -20, -40, -60, -80, -100], negative: true, labx: 1075, ladj: 4.5,
    grid: [1097, 1128, 1159, 1191, 1222, 1253], bars: [1087, 1118, 1149, 1180, 1212, 1244], bw: 22,
    vx: [1097, 1128, 1160, 1192, 1223, 1255], vy: 261 + dy, xx: [1097, 1127, 1159, 1190, 1222, 1253], xy: 288 + dy
  };
}
mini('m1', [73, -7, 82, -23, 100, -19], accel(0));
mini('m2', [84, 19, 95, -55, 100, 5], accel(190));
mini('m3', [73, 98, 73, 87, 80, 100], {
  vb: 513, top: 518, bottom: 647, left: 1072, right: 1276, zero: 648, scale: 1.25,
  yvals: [100, 80, 60, 40, 20, 0], labx: 1071, ladj: 4.5,
  grid: [1097, 1128, 1159, 1190, 1221, 1253], bars: [1084, 1115, 1146, 1178, 1209, 1240], bw: 24, bold: true,
  vx: [1097, 1128, 1158, 1190, 1221, 1253], vy: 641, xx: [1097, 1127, 1158, 1189, 1220, 1251], xy: 668
});
```
